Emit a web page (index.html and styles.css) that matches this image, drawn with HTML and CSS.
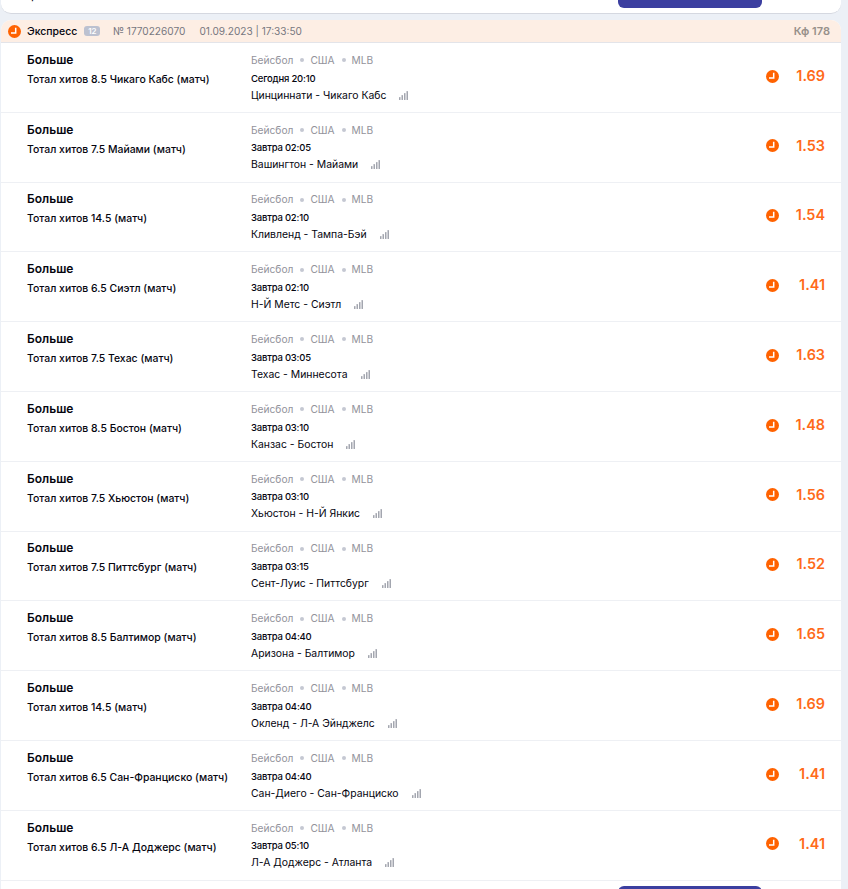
FILE: index.html
```html
<!DOCTYPE html>
<html lang="en">
<head>
  <meta charset="UTF-8" />
  <title>Экспресс</title>
  <link rel="stylesheet" href="styles.css">
</head>
<body>
  <svg class="defs" width="0" height="0">
    <symbol id="clock" viewBox="0 0 13 13">
      <circle cx="6.5" cy="6.5" r="6.5" fill="#ff6200"/>
      <path d="M7.7 2.8V7.9H3" fill="none" stroke="#fff" stroke-width="1.5"/>
    </symbol>
    <symbol id="bars" viewBox="0 0 9 9">
      <rect x="0" y="6" width="1.5" height="3" rx=".6"/>
      <rect x="2.5" y="4" width="1.5" height="5" rx=".6"/>
      <rect x="5" y="2" width="1.5" height="7" rx=".6"/>
      <rect x="7.5" y="0" width="1.5" height="9" rx=".6"/>
    </symbol>
  </svg>

  <div class="top-card">
    <span class="top-text">р</span>
    <div class="top-btn"></div>
  </div>

  <div class="bet">
    <div class="bet-head">
      <svg class="clock-small"><use href="#clock"/></svg>
      <span class="bet-type">Экспресс</span>
      <span class="bet-count">12</span>
      <span class="bet-meta bet-num">№ 1770226070</span>
      <span class="bet-meta">01.09.2023 | 17:33:50</span>
      <span class="bet-total">Кф 178</span>
    </div>

    <div class="row">
      <div class="pick"><b>Больше</b><span>Тотал хитов 8.5 Чикаго Кабс (матч)</span></div>
      <div class="event">
        <div class="league">Бейсбол<i></i>США<i></i>MLB</div>
        <div class="date">Сегодня 20:10</div>
        <div class="teams">Цинциннати - Чикаго Кабс<svg class="bars"><use href="#bars"/></svg></div>
      </div>
      <svg class="clock"><use href="#clock"/></svg>
      <div class="coef">1.69</div>
    </div>

    <div class="row">
      <div class="pick"><b>Больше</b><span>Тотал хитов 7.5 Майами (матч)</span></div>
      <div class="event">
        <div class="league">Бейсбол<i></i>США<i></i>MLB</div>
        <div class="date">Завтра 02:05</div>
        <div class="teams">Вашингтон - Майами<svg class="bars"><use href="#bars"/></svg></div>
      </div>
      <svg class="clock"><use href="#clock"/></svg>
      <div class="coef">1.53</div>
    </div>

    <div class="row">
      <div class="pick"><b>Больше</b><span>Тотал хитов 14.5 (матч)</span></div>
      <div class="event">
        <div class="league">Бейсбол<i></i>США<i></i>MLB</div>
        <div class="date">Завтра 02:10</div>
        <div class="teams">Кливленд - Тампа-Бэй<svg class="bars"><use href="#bars"/></svg></div>
      </div>
      <svg class="clock"><use href="#clock"/></svg>
      <div class="coef">1.54</div>
    </div>

    <div class="row">
      <div class="pick"><b>Больше</b><span>Тотал хитов 6.5 Сиэтл (матч)</span></div>
      <div class="event">
        <div class="league">Бейсбол<i></i>США<i></i>MLB</div>
        <div class="date">Завтра 02:10</div>
        <div class="teams">Н-Й Метс - Сиэтл<svg class="bars"><use href="#bars"/></svg></div>
      </div>
      <svg class="clock"><use href="#clock"/></svg>
      <div class="coef">1.41</div>
    </div>

    <div class="row">
      <div class="pick"><b>Больше</b><span>Тотал хитов 7.5 Техас (матч)</span></div>
      <div class="event">
        <div class="league">Бейсбол<i></i>США<i></i>MLB</div>
        <div class="date">Завтра 03:05</div>
        <div class="teams">Техас - Миннесота<svg class="bars"><use href="#bars"/></svg></div>
      </div>
      <svg class="clock"><use href="#clock"/></svg>
      <div class="coef">1.63</div>
    </div>

    <div class="row">
      <div class="pick"><b>Больше</b><span>Тотал хитов 8.5 Бостон (матч)</span></div>
      <div class="event">
        <div class="league">Бейсбол<i></i>США<i></i>MLB</div>
        <div class="date">Завтра 03:10</div>
        <div class="teams">Канзас - Бостон<svg class="bars"><use href="#bars"/></svg></div>
      </div>
      <svg class="clock"><use href="#clock"/></svg>
      <div class="coef">1.48</div>
    </div>

    <div class="row">
      <div class="pick"><b>Больше</b><span>Тотал хитов 7.5 Хьюстон (матч)</span></div>
      <div class="event">
        <div class="league">Бейсбол<i></i>США<i></i>MLB</div>
        <div class="date">Завтра 03:10</div>
        <div class="teams">Хьюстон - Н-Й Янкис<svg class="bars"><use href="#bars"/></svg></div>
      </div>
      <svg class="clock"><use href="#clock"/></svg>
      <div class="coef">1.56</div>
    </div>

    <div class="row">
      <div class="pick"><b>Больше</b><span>Тотал хитов 7.5 Питтсбург (матч)</span></div>
      <div class="event">
        <div class="league">Бейсбол<i></i>США<i></i>MLB</div>
        <div class="date">Завтра 03:15</div>
        <div class="teams">Сент-Луис - Питтсбург<svg class="bars"><use href="#bars"/></svg></div>
      </div>
      <svg class="clock"><use href="#clock"/></svg>
      <div class="coef">1.52</div>
    </div>

    <div class="row">
      <div class="pick"><b>Больше</b><span>Тотал хитов 8.5 Балтимор (матч)</span></div>
      <div class="event">
        <div class="league">Бейсбол<i></i>США<i></i>MLB</div>
        <div class="date">Завтра 04:40</div>
        <div class="teams">Аризона - Балтимор<svg class="bars"><use href="#bars"/></svg></div>
      </div>
      <svg class="clock"><use href="#clock"/></svg>
      <div class="coef">1.65</div>
    </div>

    <div class="row">
      <div class="pick"><b>Больше</b><span>Тотал хитов 14.5 (матч)</span></div>
      <div class="event">
        <div class="league">Бейсбол<i></i>США<i></i>MLB</div>
        <div class="date">Завтра 04:40</div>
        <div class="teams">Окленд - Л-А Эйнджелс<svg class="bars"><use href="#bars"/></svg></div>
      </div>
      <svg class="clock"><use href="#clock"/></svg>
      <div class="coef">1.69</div>
    </div>

    <div class="row">
      <div class="pick"><b>Больше</b><span>Тотал хитов 6.5 Сан-Франциско (матч)</span></div>
      <div class="event">
        <div class="league">Бейсбол<i></i>США<i></i>MLB</div>
        <div class="date">Завтра 04:40</div>
        <div class="teams">Сан-Диего - Сан-Франциско<svg class="bars"><use href="#bars"/></svg></div>
      </div>
      <svg class="clock"><use href="#clock"/></svg>
      <div class="coef">1.41</div>
    </div>

    <div class="row">
      <div class="pick"><b>Больше</b><span>Тотал хитов 6.5 Л-А Доджерс (матч)</span></div>
      <div class="event">
        <div class="league">Бейсбол<i></i>США<i></i>MLB</div>
        <div class="date">Завтра 05:10</div>
        <div class="teams">Л-А Доджерс - Атланта<svg class="bars"><use href="#bars"/></svg></div>
      </div>
      <svg class="clock"><use href="#clock"/></svg>
      <div class="coef">1.41</div>
    </div>

    <div class="bet-foot">
      <div class="foot-btn"></div>
    </div>
  </div>
</body>
</html>
```

FILE: styles.css
```css
* {
  box-sizing: border-box;
}

html, body {
  height: 889px;
  overflow: hidden;
}

body {
  margin: 0;
  background: #ecf0f6;
  font-family: Inter, "Noto Sans", sans-serif;
  color: #05050f;
}

.defs {
  display: block;
  height: 0;
}

.top-card {
  display: flex;
  width: 840px;
  height: 14px;
  margin-left: 1px;
  background: #fff;
  border-bottom: 1px solid #d5d8e0;
  border-radius: 0 0 10px 10px;
  overflow: hidden;
}

.top-text {
  margin: -13px 0 0 30px;
  font-size: 12px;
  line-height: 15px;
  width: 587px;
}

.top-btn {
  width: 144px;
  height: 8px;
  background: #3c3fa0;
  border-radius: 0 0 6px 6px;
}

.bet {
  width: 840px;
  margin: 6px 0 0 1px;
  background: #fff;
  border-radius: 10px 10px 0 0;
}

.bet-head {
  display: flex;
  align-items: center;
  height: 23px;
  padding: 0 11px 0 7px;
  background: #fdeee4;
  border-bottom: 1px solid #e3e4e9;
  border-radius: 10px 10px 0 0;
  font-size: 11px;
}

.clock-small {
  width: 13px;
  height: 13px;
  margin-right: 6px;
}

.bet-type {
  font-size: 10.5px;
  font-weight: 500;
}

.bet-count {
  margin-left: 7px;
  width: 16px;
  height: 10px;
  background: #bcc1d0;
  border-radius: 3px;
  color: #fff;
  font-size: 8px;
  font-weight: 600;
  line-height: 10px;
  text-align: center;
}

.bet-meta {
  color: #77777f;
  font-size: 10.1px;
  margin-left: 14px;
}

.bet-num {
  margin-left: 12.5px;
}

.bet-total {
  margin-left: auto;
  color: #97908a;
  font-weight: 600;
}

.row {
  display: flex;
  align-items: flex-start;
  height: 69.8px;
  padding: 8.8px 16px 0 26px;
  background: #fff;
  border-bottom: 1px solid #eef0f4;
}

.pick {
  display: flex;
  flex-direction: column;
  width: 224px;
  flex-shrink: 0;
}

.pick b {
  font-size: 12px;
  font-weight: 600;
  line-height: 15px;
}

.pick span {
  margin-top: 5px;
  font-size: 10.45px;
  font-weight: 500;
  line-height: 15px;
}

.event {
  flex: 1;
  margin-top: 1px;
}

.league {
  display: flex;
  align-items: center;
  color: #92929b;
  font-size: 10.2px;
  line-height: 15px;
}

.league i {
  width: 4px;
  height: 4px;
  margin: 0 6px 0 7px;
  background: #c5c8d2;
  border-radius: 50%;
}

.date {
  margin-top: 3.8px;
  font-size: 9.5px;
  font-weight: 500;
  line-height: 14px;
  letter-spacing: -.2px;
}

.teams {
  display: flex;
  align-items: center;
  margin-top: 2px;
  font-size: 10.4px;
  font-weight: 400;
  line-height: 15px;
}

.bars {
  width: 9px;
  height: 9px;
  margin-left: 13px;
  fill: #a3a6af;
}

.clock {
  width: 13px;
  height: 13px;
  margin-top: 17.8px;
  flex-shrink: 0;
}

.coef {
  width: 46px;
  margin-top: 15px;
  color: #ff6a1a;
  font-size: 14.4px;
  font-weight: 600;
  line-height: 18px;
  text-align: right;
}

.bet-foot {
  height: 9px;
  padding: 5px 0 0 617px;
}

.foot-btn {
  width: 144px;
  height: 8px;
  background: #3c3fa0;
  border-radius: 6px 6px 0 0;
}
```
